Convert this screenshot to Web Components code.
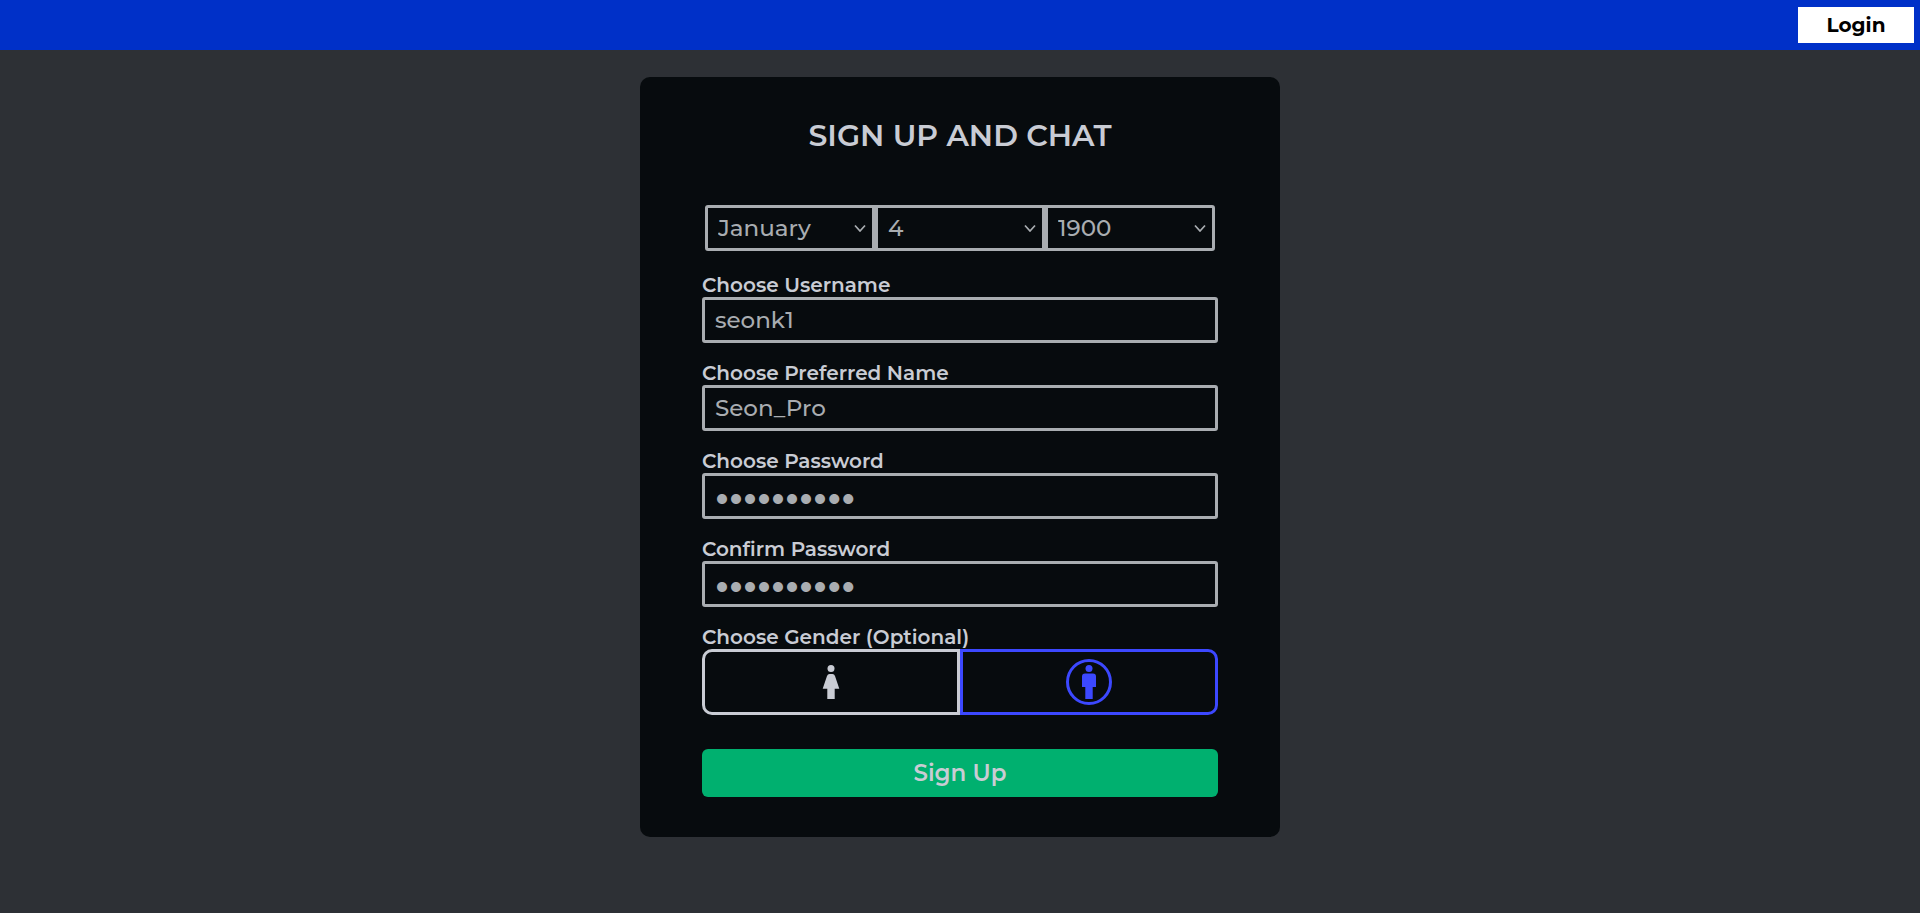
<!DOCTYPE html>
<html lang="en">
<head>
<meta charset="utf-8">
<title>Sign Up</title>
<style>
html { background: #2d3035; }
body { margin: 0; min-height: 100vh; background: #2d3035; color: #c9ccd4; font-family: Montserrat, Inter, sans-serif; }
</style>
</head>
<body>
<signup-page></signup-page>

<script>
class BaseElement extends HTMLElement {
  render(html) {
    const root = this.attachShadow({ mode: "open" });
    root.innerHTML = `<style>*{box-sizing:border-box}</style>` + html;
    return root;
  }
}

customElements.define("top-bar", class extends BaseElement {
  constructor() {
    super();
    this.render(`<style>
      :host { display: block; }
      header { display: flex; justify-content: flex-end; align-items: center; height: 50px; padding: 0 6px; background: #0030c8; }
      button { width: 116px; height: 36px; padding: 0; border: 0; background: #fff; color: #000; font: 700 20px/24px Montserrat, Inter, sans-serif; }
    </style>
    <header><button type="button"><slot></slot></button></header>`);
  }
});

customElements.define("form-card", class extends BaseElement {
  constructor() {
    super();
    this.render(`<style>
      :host { display: block; width: 640px; max-width: 100%; box-sizing: border-box; margin: 27px auto 0; padding: 40px 62px; border-radius: 10px; background: #070b0e; }
      h1 { margin: 0 0 50px; text-align: center; font: 600 30px/38px Montserrat, Inter, sans-serif; }
    </style>
    <h1><slot name="title"></slot></h1><slot></slot>`);
  }
});

customElements.define("birth-date", class extends BaseElement {
  constructor() {
    super();
    const months = ["January","February","March","April","May","June","July","August","September","October","November","December"];
    const option = (v, sel) => `<option${v === sel ? " selected" : ""}>${v}</option>`;
    const days = Array.from({ length: 31 }, (_, i) => i + 1);
    const years = Array.from({ length: 120 }, (_, i) => 1900 + i);
    const field = (label, list, sel) => `<div class="field"><select aria-label="${label}">${list.map(v => option(v, sel)).join("")}</select>
      <svg viewBox="0 0 12 8" width="12" height="8" aria-hidden="true"><path d="M1 1.5L6 7L11 1.5" fill="none" stroke="currentColor" stroke-width="1.7"/></svg></div>`;
    this.render(`<style>
      :host { display: flex; margin: 0 3px 22px; color: #a9adb1; }
      .field { flex: 1; display: grid; align-items: center; border: 3px solid #a9adb1; height: 46px; }
      .field:nth-of-type(1) { border-radius: 3px 0 0 3px; }
      .field:nth-of-type(3) { border-radius: 0 3px 3px 0; }
      select, svg { grid-area: 1 / 1; }
      select { appearance: none; width: 100%; height: 40px; border: 0; padding: 0 24px 0 10px; background: none; color: inherit; font: 500 23px/28px Montserrat, Inter, sans-serif; }
      svg { justify-self: end; margin-right: 6px; pointer-events: none; }
    </style>
    ${field("Month", months, "January")}${field("Day", days, 4)}${field("Year", years, 1900)}`);
  }
});

customElements.define("text-field", class extends BaseElement {
  connectedCallback() {
    if (this.shadowRoot) return;
    this.render(`<style>
      :host { display: block; margin-bottom: 18px; }
      label { display: block; font: 600 20px/24px Montserrat, Inter, sans-serif; }
      input { display: block; width: 100%; height: 46px; padding: 0 10px; border: 3px solid #a9adb1; border-radius: 3px; background: none; color: #a9adb1; font: 500 23px/28px Montserrat, Inter, sans-serif; }
      input[type=password] { font: 800 32px/28px Inter, sans-serif; }
    </style>
    <label for="input">${this.getAttribute("label")}</label>
    <input id="input" type="${this.getAttribute("type") || "text"}" value="${this.getAttribute("value")}">`);
  }
});

customElements.define("gender-picker", class extends BaseElement {
  constructor() {
    super();
    this.render(`<style>
      :host { display: block; margin-bottom: 34px; }
      fieldset { margin: 0; padding: 0; border: 0; }
      legend { padding: 0; font: 600 20px/24px Montserrat, Inter, sans-serif; }
      .row { display: flex; }
      label { flex: 1; display: grid; place-items: center; height: 66px; border: 3px solid currentColor; }
      label:first-child { border-radius: 10px 0 0 10px; }
      label:last-child { border-radius: 0 10px 10px 0; }
      label:has(:checked) { color: #3c48ff; }
      input, svg { grid-area: 1 / 1; }
      input { appearance: none; width: 46px; height: 46px; margin: 0; border-radius: 50%; color: inherit; }
      input:checked { border: 3px solid #3c48ff; }
      svg { pointer-events: none; fill: currentColor; }
    </style>
    <fieldset>
      <legend>Choose Gender (Optional)</legend>
      <div class="row">
        <label><input type="radio" name="gender" aria-label="Female">
          <svg width="18" height="34" viewBox="0 0 18 34"><circle cx="9" cy="3.5" r="3.5"/><path d="M7.5 9H10.5Q12.3 9 13 11L17.3 23.7H12.7V34H5.3V23.7H.7L5 11Q5.7 9 7.5 9Z"/></svg></label>
        <label><input type="radio" name="gender" aria-label="Male" checked>
          <svg width="18" height="34" viewBox="0 0 18 34"><circle cx="9" cy="3.5" r="3.5"/><path d="M5 8.6H13Q16 8.6 16 11.6V22H12.7V34H5.3V22H2V11.6Q2 8.6 5 8.6Z"/></svg></label>
      </div>
    </fieldset>`);
  }
});

customElements.define("submit-button", class extends BaseElement {
  constructor() {
    super();
    this.render(`<style>
      :host { display: block; }
      button { display: block; width: 100%; height: 48px; padding: 0; border: 0; border-radius: 6px; background: #00b06f; color: #c9ccd4; font: 600 23px/28px Montserrat, Inter, sans-serif; }
    </style>
    <button type="button"><slot></slot></button>`);
  }
});

customElements.define("signup-page", class extends BaseElement {
  constructor() {
    super();
    this.render(`<style>:host { display: block; }</style>
    <top-bar>Login</top-bar>
    <main><form-card>
      <span slot="title">SIGN UP AND CHAT</span>
      <birth-date></birth-date>
      <text-field label="Choose Username" value="seonk1"></text-field>
      <text-field label="Choose Preferred Name" value="Seon_Pro"></text-field>
      <text-field label="Choose Password" type="password" value="0123456789"></text-field>
      <text-field label="Confirm Password" type="password" value="0123456789"></text-field>
      <gender-picker></gender-picker>
      <submit-button>Sign Up</submit-button>
    </form-card></main>`);
  }
});
</script>
</body>
</html>
